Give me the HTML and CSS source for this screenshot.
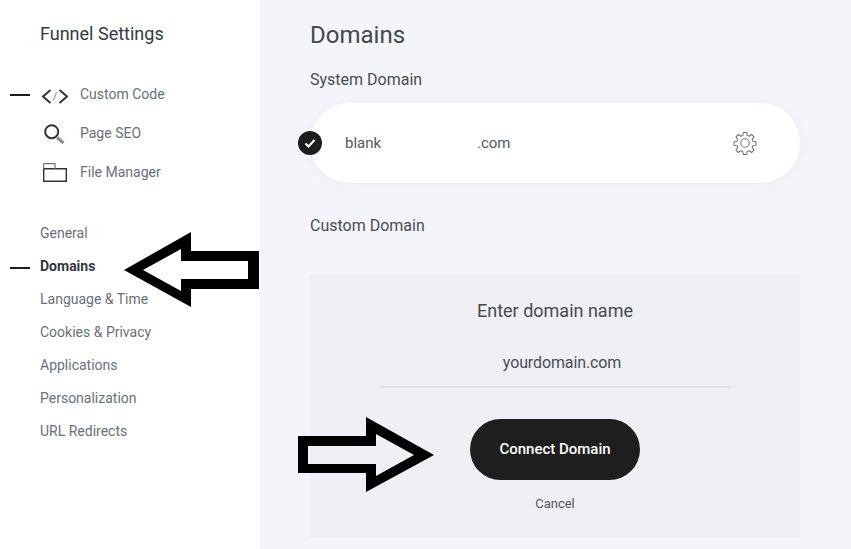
FILE: index.html
```
<!DOCTYPE html>
<html lang="en">
<head>
<meta charset="utf-8">
<title>Funnel Settings</title>
<link rel="stylesheet" href="styles.css">
</head>
<body>
<div class="app">
  <aside class="sidebar">
    <h2 class="side-title">Funnel Settings</h2>
    <nav class="tools">
      <a class="tool active">
        <svg class="tool-icon" viewBox="0 0 28 22"><path d="M10.500 7 3 13.500 10.500 20M19.500 7 27 13.500 19.500 20" fill="none" stroke="#333" stroke-width="2"/><path d="M16.500 9 13.500 17.500" fill="none" stroke="#aaa" stroke-width="1.400"/></svg>
        <span>Custom Code</span>
      </a>
      <a class="tool">
        <svg class="tool-icon" viewBox="0 0 28 22"><circle cx="11.700" cy="9.700" r="6.500" fill="none" stroke="#333" stroke-width="2"/><path d="m17 15.500 6.500 5.500" fill="none" stroke="#8c8c8c" stroke-width="3.200"/></svg>
        <span>Page SEO</span>
      </a>
      <a class="tool">
        <svg class="tool-icon" viewBox="0 0 28 22"><path d="M3.700 20.300V7.700h22.600v12.600z" fill="none" stroke="#333" stroke-width="1.400"/><path d="M3.700 7.700v-5H15v5" fill="none" stroke="#777" stroke-width="1.200"/></svg>
        <span>File Manager</span>
      </a>
    </nav>
    <nav class="links">
      <a class="link">General</a>
      <a class="link active">Domains</a>
      <a class="link">Language &amp; Time</a>
      <a class="link">Cookies &amp; Privacy</a>
      <a class="link">Applications</a>
      <a class="link">Personalization</a>
      <a class="link">URL Redirects</a>
    </nav>
  </aside>
  <main class="main">
    <h1 class="page-title">Domains</h1>
    <h3 class="section-title">System Domain</h3>
    <div class="domain-card">
      <span class="check">
        <svg viewBox="0 0 24 24" width="24" height="24"><path d="m7.500 12.500 3 3 6-6.500" fill="none" stroke="#fff" stroke-width="2"/></svg>
      </span>
      <span class="domain-name">blank</span>
      <span class="domain-tld">.com</span>
      <svg class="gear" viewBox="0 0 24 24"><path d="M10.300 1.500h3.400l.5 3 1.900.8 2.500-1.800 2.400 2.400-1.800 2.500.8 1.900 3 .5v3.400l-3 .5-.8 1.900 1.800 2.500-2.400 2.400-2.500-1.800-1.900.8-.5 3h-3.400l-.5-3-1.900-.8-2.500 1.800-2.400-2.400 1.800-2.500-.8-1.900-3-.5v-3.400l3-.5.8-1.900-1.800-2.500 2.400-2.400 2.500 1.800 1.900-.8z" fill="none" stroke="#777" stroke-width="1.100" stroke-linejoin="round"/><circle cx="12" cy="12" r="4.200" fill="none" stroke="#777" stroke-width="1.100"/></svg>
    </div>
    <h3 class="section-title custom">Custom Domain</h3>
    <section class="connect">
      <div class="connect-title">Enter domain name</div>
      <div class="connect-input">yourdomain.com</div>
      <button class="connect-btn">Connect Domain</button>
      <a class="cancel">Cancel</a>
    </section>
  </main>
  <svg class="annotation" viewBox="0 0 851 549" width="851" height="549">
    <path fill-rule="evenodd" d="M124 270 191 232V251H259V289H191V307ZM143 270 181 291V279H248V261H181V249Z"/>
    <path fill-rule="evenodd" d="M434 455 366 417V436H298V473H366V492ZM414 455 376 476V464H308V446H376V434Z"/>
  </svg>
</div>
</body>
</html>
```
FILE: styles.css
```
* { box-sizing: border-box; }
html, body { margin: 0; height: 100%; overflow: hidden; }
body { font-family: Roboto, "Liberation Sans", sans-serif; color: #3c3c3c; }
.app { position: relative; display: flex; width: 851px; height: 549px; overflow: hidden; }
.sidebar { width: 260px; flex: none; background: #fff; padding: 23px 0 0 40px; }
.side-title { margin: 0 0 36px; font-size: 18px; line-height: 22px; font-weight: 400; color: #333a44; }
.tools { display: flex; flex-direction: column; gap: 13px; margin-bottom: 32px; }
.tool { position: relative; display: flex; align-items: center; height: 26px; font-size: 14px; color: #6a7079; }
.tool-icon { width: 28px; height: 22px; margin-right: 12px; flex: none; }
.tool.active::before, .link.active::before { content: ""; position: absolute; left: -30px; top: 50%; width: 20px; height: 2px; background: #1d1d1d; }
.links { display: flex; flex-direction: column; }
.link { position: relative; height: 33px; line-height: 33px; font-size: 14px; color: #6a7079; }
.link.active { font-weight: 700; color: #33383f; }
.main { flex: 1; background: #f4f5fa; padding: 20px 0 0 50px; }
.page-title { margin: 0 0 20px; font-size: 24px; line-height: 30px; font-weight: 400; color: #44474d; }
.section-title { margin: 0; font-size: 16px; line-height: 20px; font-weight: 400; color: #484d54; }
.domain-card { position: relative; display: flex; align-items: center; width: 490px; height: 80px; margin-top: 13px; padding-left: 35px; background: #fff; border-radius: 40px; box-shadow: 0 2px 12px rgba(60, 70, 110, .05); font-size: 15px; color: #55585d; }
.check { position: absolute; left: -12px; top: 28px; display: flex; width: 24px; height: 24px; border-radius: 50%; background: #1d1d1d; }
.domain-name { width: 132px; }
.gear { position: absolute; right: 43px; top: 28px; width: 24px; height: 24px; }
.custom { margin-top: 33px; }
.connect { display: flex; flex-direction: column; align-items: center; width: 490px; height: 264px; margin-top: 38px; padding-top: 26px; background: #eff0f5; }
.connect-title { font-size: 18px; line-height: 22px; color: #48494d; }
.connect-input { width: 351px; height: 61px; margin-top: 5px; border-bottom: 2px solid #e2e2e4; padding: 25px 0 0 14px; text-align: center; font-size: 16px; line-height: 22px; letter-spacing: -.12px; color: #4a4c52; }
.connect-btn { width: 170px; height: 61px; margin-top: 31px; padding: 0 0 2px; border: 0; border-radius: 31px; background: #1e1e1e; color: #fff; font: 500 15px Roboto, sans-serif; }
.cancel { margin-top: 15px; font-size: 13px; line-height: 18px; color: #555; }
.annotation { position: absolute; left: 0; top: 0; pointer-events: none; }
```
